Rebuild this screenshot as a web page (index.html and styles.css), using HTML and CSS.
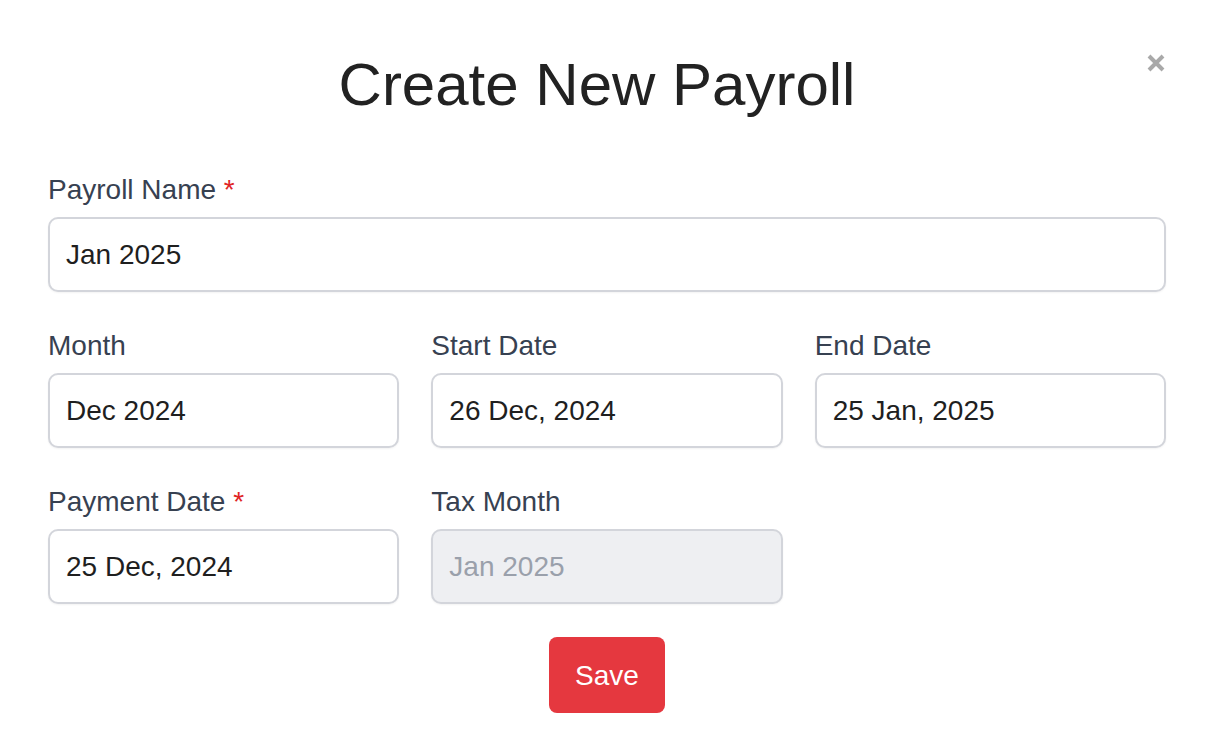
FILE: index.html
```html
<!DOCTYPE html>
<html lang="en">
<head>
<meta charset="utf-8">
<title>Create New Payroll</title>
<link rel="stylesheet" href="styles.css">
</head>
<body>
<div class="modal">
  <div class="header">
    <h1 class="title">Create New Payroll</h1>
    <button class="close" aria-label="Close">
      <svg width="20" height="20" viewBox="0 0 20 20"><path d="M3 3 L17 17 M17 3 L3 17" stroke="#a9a9a9" stroke-width="4" stroke-linecap="butt"/></svg>
    </button>
  </div>
  <form class="form">
    <div class="field">
      <label class="label">Payroll Name <span class="req">*</span></label>
      <div class="input">Jan 2025</div>
    </div>
    <div class="grid">
      <div class="field">
        <label class="label">Month</label>
        <div class="input">Dec 2024</div>
      </div>
      <div class="field">
        <label class="label">Start Date</label>
        <div class="input">26 Dec, 2024</div>
      </div>
      <div class="field">
        <label class="label">End Date</label>
        <div class="input">25 Jan, 2025</div>
      </div>
      <div class="field">
        <label class="label">Payment Date <span class="req">*</span></label>
        <div class="input">25 Dec, 2024</div>
      </div>
      <div class="field">
        <label class="label">Tax Month</label>
        <div class="input disabled">Jan 2025</div>
      </div>
    </div>
    <div class="actions">
      <button type="button" class="save">Save</button>
    </div>
  </form>
</div>
</body>
</html>
```

FILE: styles.css
```css
* { box-sizing: border-box; }
html, body { margin: 0; padding: 0; background: #ffffff; }
body {
  font-family: "Liberation Sans", Arial, Helvetica, sans-serif;
  color: #222222;
}
.modal {
  padding: 49px 48px 40px;
}
.header {
  display: flex;
  align-items: flex-start;
  margin-bottom: 52px;
}
.title {
  flex: 1;
  margin: 0;
  text-align: center;
  font-size: 60px;
  line-height: 72px;
  font-weight: 400;
  color: #222222;
}
.close {
  flex: none;
  width: 20px;
  height: 20px;
  margin-top: 4px;
  padding: 0;
  border: 0;
  background: none;
  cursor: pointer;
}
.close svg { display: block; }
.form { display: flex; flex-direction: column; gap: 37px; }
.grid {
  display: grid;
  grid-template-columns: repeat(3, 1fr);
  column-gap: 32px;
  row-gap: 37px;
}
.field { display: flex; flex-direction: column; gap: 11px; }
.label {
  padding-top: 1px;
  font-size: 28px;
  line-height: 32px;
  color: #374151;
}
.req { color: #e02424; }
.input {
  height: 75px;
  border: 2px solid #d3d5db;
  border-radius: 10px;
  padding: 1px 16px 0;
  display: flex;
  align-items: center;
  font-size: 28px;
  color: #1f1f1f;
  background: #fff;
  box-shadow: 0 1px 2px rgba(0,0,0,0.05);
}
.input.disabled {
  background: #eeeff2;
  color: #9aa0ab;
}
.actions {
  display: flex;
  justify-content: center;
  margin-top: -4px;
}
.save {
  width: 116px;
  height: 76px;
  border: 0;
  border-radius: 8px;
  background: #e5383f;
  color: #fff;
  font-family: "Liberation Sans", Arial, Helvetica, sans-serif;
  font-size: 28px;
  padding: 2px 0 0;
}
```
